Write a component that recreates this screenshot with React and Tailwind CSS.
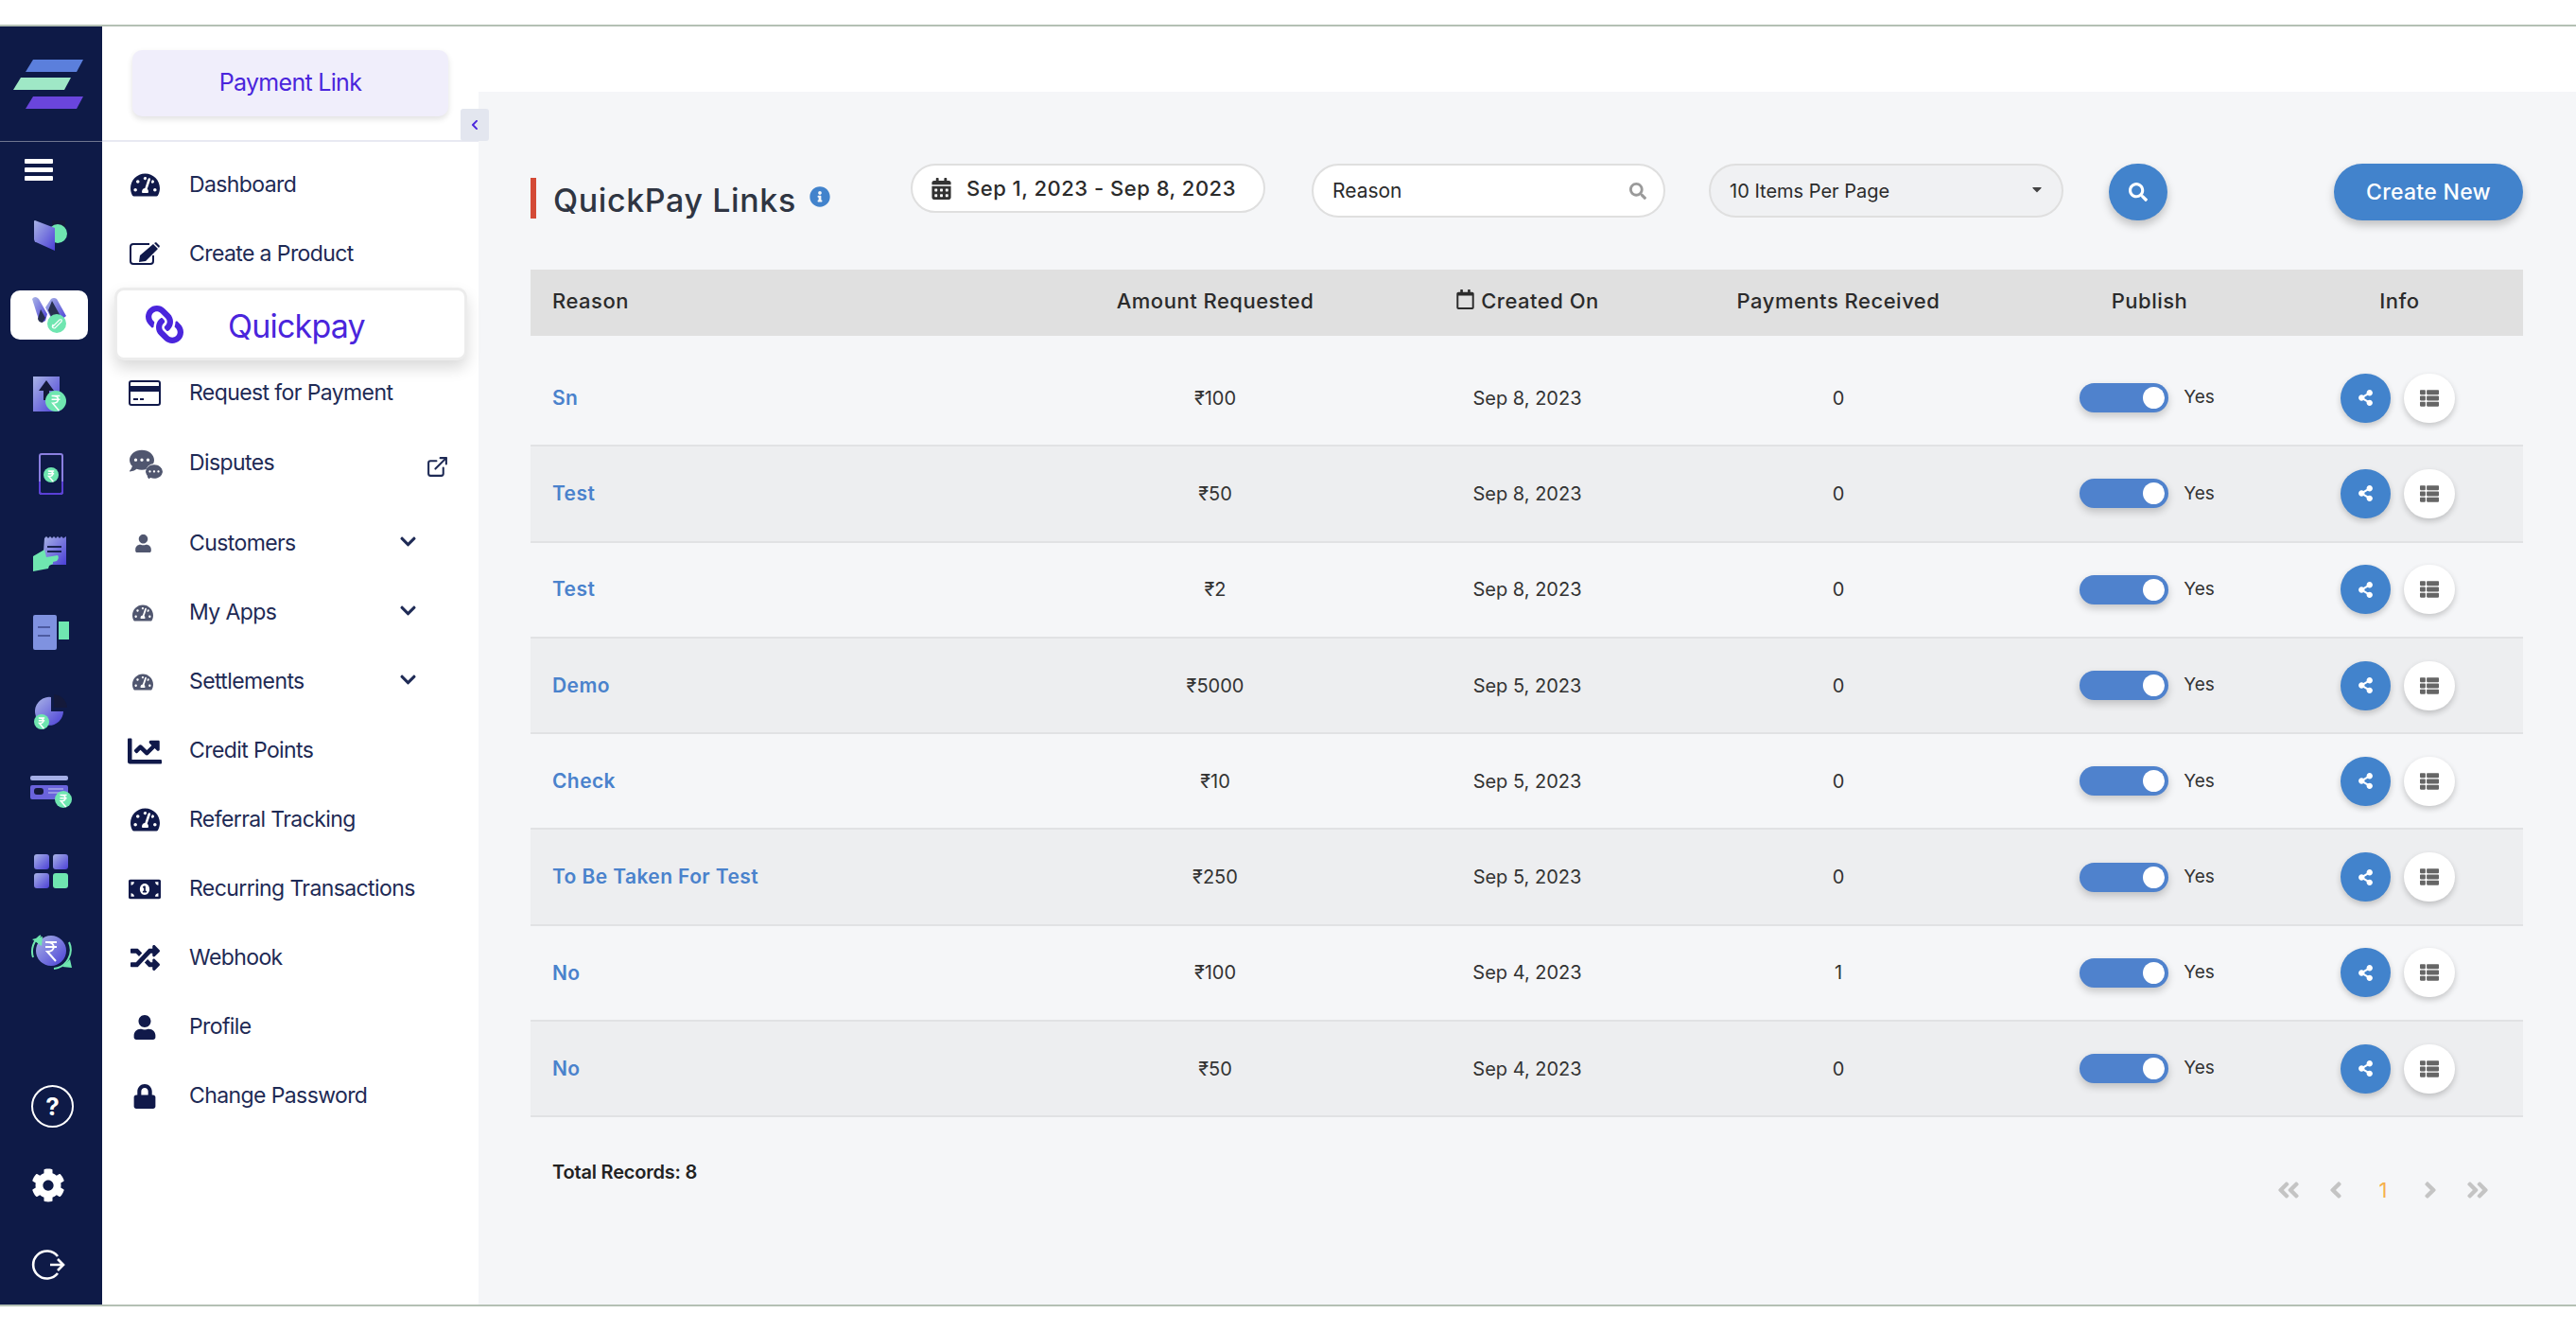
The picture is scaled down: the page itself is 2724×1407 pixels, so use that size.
import React from "react";
import {
    FaTachometerAlt, FaLink, FaUser, FaChartLine, FaMoneyBillAlt,
    FaRandom, FaLock, FaCalendarAlt, FaRegCalendar, FaInfoCircle, FaSearch, FaShareAlt, FaThList,
    FaCog, FaChevronDown, FaChevronLeft, FaAngleDoubleLeft, FaAngleLeft, FaAngleRight, FaAngleDoubleRight,
    FaCommentDots, FaCaretDown,
} from "react-icons/fa";
import { FiExternalLink } from "react-icons/fi";

const menuFont = { fontFamily: "Inter, 'Noto Sans', sans-serif" };
const grid = "grid grid-cols-[546px_356px_304px_354px_304px_243px] items-center";

const rows = [
    ["Sn", "₹100", "Sep 8, 2023", "0"],
    ["Test", "₹50", "Sep 8, 2023", "0"],
    ["Test", "₹2", "Sep 8, 2023", "0"],
    ["Demo", "₹5000", "Sep 5, 2023", "0"],
    ["Check", "₹10", "Sep 5, 2023", "0"],
    ["To Be Taken For Test", "₹250", "Sep 5, 2023", "0"],
    ["No", "₹100", "Sep 4, 2023", "1"],
    ["No", "₹50", "Sep 4, 2023", "0"],
];

const Grad = ({ id }) => (
    <defs>
        <linearGradient id={id} x1="0" y1="0" x2="1" y2="1">
            <stop offset="0" stopColor="#a9b4e6" />
            <stop offset="1" stopColor="#4a3fd6" />
        </linearGradient>
    </defs>
);

const Rupee = ({ cx, cy, r }) => (
    <g>
        <circle cx={cx} cy={cy} r={r} fill="#6fe6b0" />
        <path
            d={`M${cx - r * 0.4} ${cy - r * 0.5}h${r * 0.8}M${cx - r * 0.4} ${cy - r * 0.15}h${r * 0.8}M${cx - r * 0.3} ${cy - r * 0.5}c${r * 0.7} 0 ${r * 0.7} ${r * 0.7} 0 ${r * 0.7}l${r * 0.6} ${r * 0.7}`}
            fill="none"
            stroke="#fff"
            strokeWidth="1.5"
        />
    </g>
);

const railIcons = [
    <svg width="38" height="34" viewBox="0 0 38 34" key="a">
        <Grad id="g1" />
        <rect x="20" y="1" width="14" height="10" fill="#14193a" />
        <circle cx="26" cy="15" r="10" fill="#6fe6b0" />
        <path d="M2 1l21 8v24L3 24q-2-1-2-3V2q0-1 1-1z" fill="url(#g1)" />
    </svg>,
    <div key="b" className="w-[82px] h-[52px] mr-[5px] bg-white rounded-[10px] flex items-center justify-center">
        <svg width="38" height="42" viewBox="0 0 38 42">
            <Grad id="g2" />
            <path d="M1 4q3-4 7 0l9 16-2 7q-4 3-7-1z" fill="url(#g2)" />
            <path d="M15 13l6-9q3-2 6 0l10 18-8 6-8-4z" fill="url(#g2)" />
            <path d="M10 15l5 9-3 5q-4 0-5-4zM22 6l10 18-9 3-5-11z" fill="#27304f" />
            <circle cx="27" cy="30" r="10" fill="#6fe6b0" />
            <path d="M23 33l7-7q3-1 2 2l-7 7q-4 0-2-4z" fill="none" stroke="#fff" strokeWidth="1.2" />
        </svg>
    </div>,
    <svg width="38" height="38" viewBox="0 0 38 38" key="c">
        <Grad id="g3" />
        <rect x="0" y="0" width="28" height="37" fill="url(#g3)" />
        <path d="M14 4l8 11h-5v10h-6V15H6z" fill="#14193a" />
        <Rupee cx="24" cy="26" r="11" />
    </svg>,
    <svg width="26" height="44" viewBox="0 0 26 44" key="d">
        <rect x="1" y="1" width="24" height="42" rx="2" fill="#0e1a47" stroke="#8a7fe0" strokeWidth="2" />
        <path d="M1 30v11q0 2 2 2h20q2 0 2-2V30" fill="none" stroke="#5a3fd6" strokeWidth="2" />
        <Rupee cx="13" cy="23" r="8" />
    </svg>,
    <svg width="38" height="39" viewBox="0 0 38 39" key="e">
        <Grad id="g5" />
        <path d="M12 3l2-2 2 2 2-2 2 2 2-2 2 2 2-2 2 2 2-2 2 2 3-2v30h-25z" fill="url(#g5)" />
        <path d="M15 12h15M15 17h15" stroke="#1a2350" strokeWidth="2" />
        <path d="M0 22l12-7 2 8 12-2q2 3-1 6l-4 1v2l-4 2 -1 3-16 3z" fill="#6fe6b0" />
    </svg>,
    <svg width="38" height="38" viewBox="0 0 38 38" key="f">
        <rect x="0" y="0" width="25" height="37" rx="2" fill="#7f92e0" />
        <rect x="27" y="7" width="11" height="19" fill="#6fe6b0" />
        <path d="M5 13h13M5 22h13" stroke="#3e4a8c" strokeWidth="1.5" />
    </svg>,
    <svg width="36" height="38" viewBox="0 0 36 38" key="g">
        <Grad id="g7" />
        <path d="M21 3a15 15 0 1 0 13 15H21z" transform="translate(-3 0)" fill="url(#g7)" />
        <path d="M21 0a15 15 0 0 1 14 14H21z" fill="#14193a" />
        <Rupee cx="8" cy="29" r="8" />
    </svg>,
    <svg width="44" height="34" viewBox="0 0 44 34" key="h">
        <rect x="0" y="0" width="40" height="5" rx="2" fill="#a5afe6" />
        <rect x="0" y="10" width="40" height="15" rx="2" fill="#6a63dc" />
        <rect x="4" y="13" width="10" height="7" rx="3" fill="#14193a" />
        <path d="M19 14h16M19 18h16" stroke="#c5cbf0" strokeWidth="1.2" />
        <Rupee cx="35" cy="25" r="9" />
    </svg>,
    <svg width="36" height="36" viewBox="0 0 36 36" key="i">
        <Grad id="g9" />
        <rect x="0" y="0" width="16" height="16" rx="3" fill="url(#g9)" />
        <rect x="20" y="0" width="16" height="16" rx="3" fill="url(#g9)" />
        <rect x="0" y="20" width="16" height="16" rx="3" fill="url(#g9)" />
        <rect x="20" y="20" width="16" height="16" rx="3" fill="#6fe6b0" />
    </svg>,
    <svg width="46" height="42" viewBox="0 0 46 42" key="j">
        <Grad id="g10" />
        <circle cx="23" cy="21" r="16" fill="url(#g10)" />
        <path d="M4 28A20 20 0 0 1 12 5M42 12a20 20 0 0 1-16 28" fill="none" stroke="#6fe6b0" strokeWidth="2" />
        <path d="M3 9l11-3-1 10zM43 30l-8 8 10 1z" fill="#6fe6b0" />
        <path d="M17 12h12M17 17h12M19 12c9 0 9 10 0 10l9 10" fill="none" stroke="#fff" strokeWidth="2" />
    </svg>,
];

const EditIcon = () => (
    <svg width="32" height="25" viewBox="0 0 32 25">
        <path d="M21 2H4Q1 2 1 5v15q0 3 3 3h18q3 0 3-3v-6" fill="none" stroke="#10194a" strokeWidth="2" />
        <path d="M11 14L25 2l5 5L17 20l-7 1zM26 1l2-1 4 4-1 2z" fill="#10194a" />
    </svg>
);

const CardIcon = () => (
    <svg width="34" height="27" viewBox="0 0 34 27">
        <rect x="1" y="1" width="32" height="25" rx="2" fill="none" stroke="#10194a" strokeWidth="2" />
        <rect x="1" y="6" width="32" height="6" fill="#10194a" />
        <path d="M5 20h5M12 20h4" stroke="#10194a" strokeWidth="2" />
    </svg>
);

const Rail = () => (
    <div className="w-[108px] shrink-0 bg-[#0e1a47] flex flex-col">
        <div className="h-[122px] flex items-start justify-center pt-[35px] pr-[6px] border-b border-[#6f7690]">
            <svg width="74" height="52" viewBox="0 0 74 52">
                <path d="M21 0h53l-7 13H13z" fill="#5b7fdc" />
                <path d="M8 19h53l-7 13H0z" fill="#9fe8c6" />
                <path d="M21 39h53l-7 13H13z" fill="#6a45dc" />
            </svg>
        </div>
        <div className="h-[57px] pl-[26px] pt-[18px] flex flex-col gap-[4px]">
            <div className="w-[30px] h-[5px] bg-white rounded-[1px]" />
            <div className="w-[30px] h-[5px] bg-white rounded-[1px]" />
            <div className="w-[30px] h-[5px] bg-white rounded-[1px]" />
        </div>
        {railIcons.map((icon, i) => (
            <div key={i} className="h-[84px] flex items-center justify-center">
                {icon}
            </div>
        ))}
        <div className="mt-auto pl-[33px]">
            <div className="h-[84px] flex items-center">
                <div className="w-[45px] h-[45px] rounded-full border-2 border-white flex items-center justify-center text-white text-[26px] font-bold" style={menuFont}>?</div>
            </div>
            <div className="h-[84px] flex items-center">
                <FaCog className="text-white text-[36px]" />
            </div>
            <div className="h-[84px] flex items-center">
                <svg width="36" height="32" viewBox="0 0 36 32" fill="none" stroke="#fff" strokeWidth="2.6">
                    <path d="M28 7A14.5 14.5 0 1 0 28 25" />
                    <path d="M20 16h14M28 10l6 6-6 6" />
                </svg>
            </div>
        </div>
    </div>
);

const MenuItem = ({ icon, label, chevron, right, h = "h-[73px]", extra = "" }) => (
    <div className={`${h} ${extra} flex items-center text-[#1e2a55] text-[23px] tracking-[-0.6px]`} style={menuFont}>
        <div className="w-[62px] ml-[14px] mr-[16px] flex items-center justify-center text-[#10194a]">{icon}</div>
        <span>{label}</span>
        {chevron && <FaChevronDown className="ml-auto mr-[65px] text-[19px] -mt-[4px]" />}
        {right}
    </div>
);

const Sidebar = () => (
    <div className="w-[398px] shrink-0 bg-white relative flex flex-col">
        <div className="h-[122px] border-b-2 border-[#e8e9f2] px-[32px] pt-[25px]">
            <div className="h-[70px] bg-[#f0eefb] rounded-[10px] shadow-[0_3px_6px_rgba(0,0,0,0.12)] flex items-center justify-center text-[#4a25dc] text-[25px] tracking-[-0.7px]" style={menuFont}>
                Payment Link
            </div>
        </div>
        <div className="absolute left-[379px] top-[87px] w-[30px] h-[34px] bg-[#e3e6ef] rounded-[3px] flex items-center justify-center z-10">
            <FaChevronLeft className="text-[#4a25dc] text-[12px]" />
        </div>
        <div className="pt-[9px]">
            <MenuItem icon={<FaTachometerAlt className="text-[31px]" />} label="Dashboard" />
            <MenuItem icon={<EditIcon />} label="Create a Product" />
            <div className="h-[77px] -mt-[1px] ml-[13px] mr-[12px] bg-white rounded-[10px] border-[3px] border-[#ececec] shadow-[0_8px_16px_rgba(0,0,0,0.15)] flex items-center text-[#4a25dc] text-[34px] tracking-[-0.8px] relative" style={menuFont}>
                <FaLink className="text-[40px] -scale-x-100 ml-[30px] mr-[47px]" />
                <span className="mt-[3px]">Quickpay</span>
            </div>
            <MenuItem icon={<CardIcon />} label="Request for Payment" h="h-[68px]" />
            <MenuItem
                icon={
                    <div className="relative w-[32px] h-[32px] text-[#50566f]">
                        <FaCommentDots className="text-[26px]" />
                        <FaCommentDots className="text-[18px] absolute right-[-3px] bottom-[-2px] bg-white rounded-full" />
                    </div>
                }
                label="Disputes"
                h="h-[77px]"
                extra="pt-[4px]"
                right={<FiExternalLink className="ml-auto mr-[31px] mt-[8px] text-[25px]" />}
            />
            <div className="h-[12px]" />
            <MenuItem icon={<FaUser className="text-[19px] text-[#50566f] mr-[4px]" />} label="Customers" chevron />
            <MenuItem icon={<FaTachometerAlt className="text-[22px] text-[#50566f] mr-[4px]" />} label="My Apps" chevron />
            <MenuItem icon={<FaTachometerAlt className="text-[22px] text-[#50566f] mr-[4px]" />} label="Settlements" chevron />
            <MenuItem icon={<FaChartLine className="text-[36px]" />} label="Credit Points" />
            <MenuItem icon={<FaTachometerAlt className="text-[31px]" />} label="Referral Tracking" />
            <MenuItem icon={<FaMoneyBillAlt className="text-[34px]" />} label="Recurring Transactions" />
            <MenuItem icon={<FaRandom className="text-[31px]" />} label="Webhook" />
            <MenuItem icon={<FaUser className="text-[26px]" />} label="Profile" />
            <MenuItem icon={<FaLock className="text-[26px]" />} label="Change Password" />
        </div>
    </div>
);

const Toolbar = () => (
    <div className="flex items-start h-[60px] text-[#2b2b2b]">
        <div className="w-[402px] flex items-center gap-[14px] mt-[15px]">
            <div className="flex items-center h-[43px] border-l-[6px] border-[#d44a36] pl-[18px] text-[34px] font-medium text-[#2f3542] tracking-[0.6px]">
                <span className="mt-[3px]">QuickPay Links</span>
            </div>
            <FaInfoCircle className="text-[#4283cc] text-[22px] -mt-[4px]" />
        </div>
        <div className="w-[375px] h-[52px] mr-[49px] bg-white border-2 border-[#dfdfdf] rounded-full flex items-center pl-[19px] text-[22px] font-medium tracking-[0.5px]">
            <FaCalendarAlt className="text-[23px] text-[#333] mr-[15px]" />
            Sep 1, 2023 - Sep 8, 2023
        </div>
        <div className="w-[374px] h-[57px] mr-[46px] bg-white border-2 border-[#dfdfdf] rounded-full flex items-center pl-[20px] pr-[18px] text-[21px]">
            Reason
            <FaSearch className="ml-auto text-[#9a9a9a] text-[18px]" />
        </div>
        <div className="w-[375px] h-[57px] mr-[48px] bg-[#f0f1f3] border-2 border-[#dfdfdf] rounded-full flex items-center pl-[20px] pr-[18px] text-[20px]">
            10 Items Per Page
            <FaCaretDown className="ml-auto text-[#444] text-[16px] -mt-[4px]" />
        </div>
        <div className="w-[62px] h-[60px] bg-[#4283cc] rounded-full shadow-[0_5px_10px_rgba(0,0,0,0.22)] flex items-center justify-center">
            <FaSearch className="text-white text-[20px]" />
        </div>
        <div className="ml-auto w-[200px] h-[60px] bg-[#4283cc] rounded-full shadow-[0_5px_10px_rgba(0,0,0,0.22)] flex items-center justify-center text-white text-[23px] font-medium tracking-[0.3px]">
            Create New
        </div>
    </div>
);

const Row = ({ row, even }) => (
    <div className={`${grid} h-[101.3px] border-b-2 border-[#e1e2e4] text-[#333] text-[20px] ${even ? "bg-[#edeef0]" : ""}`}>
        <div className="pl-[23px] text-[#4a82cc] text-[21px] font-semibold tracking-[0.4px]">{row[0]}</div>
        <div className="text-center">{row[1]}</div>
        <div className="text-center">{row[2]}</div>
        <div className="text-center">{row[3]}</div>
        <div className="flex items-center justify-center pr-[5px]">
            <div className="w-[94px] h-[31px] rounded-full bg-[#4f82cd] shadow-[0_4px_8px_rgba(0,0,0,0.2)] flex items-center justify-end pr-[4px]">
                <div className="w-[23px] h-[23px] rounded-full bg-white" />
            </div>
            <span className="ml-[16px] text-[19px]">Yes</span>
        </div>
        <div className="flex items-center gap-[14px] pl-[50px]">
            <div className="w-[53px] h-[52px] rounded-full bg-[#4283cc] shadow-[0_3px_6px_rgba(0,0,0,0.2)] flex items-center justify-center">
                <FaShareAlt className="text-white text-[17px]" />
            </div>
            <div className="w-[54px] h-[52px] rounded-full bg-white shadow-[0_3px_6px_rgba(0,0,0,0.2)] flex items-center justify-center">
                <FaThList className="text-[#666] text-[20px]" />
            </div>
        </div>
    </div>
);

const Table = () => (
    <div className="mt-[52px]">
        <div className={`${grid} h-[70px] pb-[3px] bg-[#e0e0e0] text-[#2b2b2b] text-[22px] font-medium tracking-[0.5px]`}>
            <div className="pl-[23px]">Reason</div>
            <div className="text-center">Amount Requested</div>
            <div className="flex items-center justify-center gap-[6px]">
                <FaRegCalendar className="text-[21px] -mt-[4px]" />
                Created On
            </div>
            <div className="text-center">Payments Received</div>
            <div className="text-center">Publish</div>
            <div className="text-center pr-[18px]">Info</div>
        </div>
        <div className="h-[16px]" />
        {rows.map((row, i) => (
            <Row key={i} row={row} even={i % 2 === 1} />
        ))}
    </div>
);

const Pagination = () => (
    <div className="mt-[63px] mr-[36px] flex items-center gap-[26px] text-[#c4c4c4] text-[28px] h-[28px]">
        <FaAngleDoubleLeft className="w-[24px]" />
        <FaAngleLeft className="w-[24px]" />
        <span className="w-[24px] text-center text-[#f5b04c] text-[22px]">1</span>
        <FaAngleRight className="w-[24px]" />
        <FaAngleDoubleRight className="w-[24px]" />
    </div>
);

export default function App() {
    return (
        <div className="w-[2724px] h-[1407px] overflow-hidden bg-white flex flex-col" style={{ fontFamily: "Inter, 'Noto Sans', sans-serif" }}>
            <div className="h-[28px] shrink-0 border-b-2 border-[#b4c0b4]" />
            <div className="h-[1351px] shrink-0 flex">
                <Rail />
                <Sidebar />
                <div className="flex-1 flex flex-col">
                    <div className="h-[69px] bg-white" />
                    <div className="flex-1 bg-[#f5f6f8] pl-[55px] pr-[56px] pt-[76px]">
                        <Toolbar />
                        <Table />
                        <div className="flex justify-between items-start">
                            <div className="mt-[43px] ml-[23px] text-[20px] font-semibold text-[#222] tracking-[-0.2px]">Total Records: 8</div>
                            <Pagination />
                        </div>
                    </div>
                </div>
            </div>
            <div className="flex-1 border-t-2 border-[#b4c0b4]" />
        </div>
    );
}
